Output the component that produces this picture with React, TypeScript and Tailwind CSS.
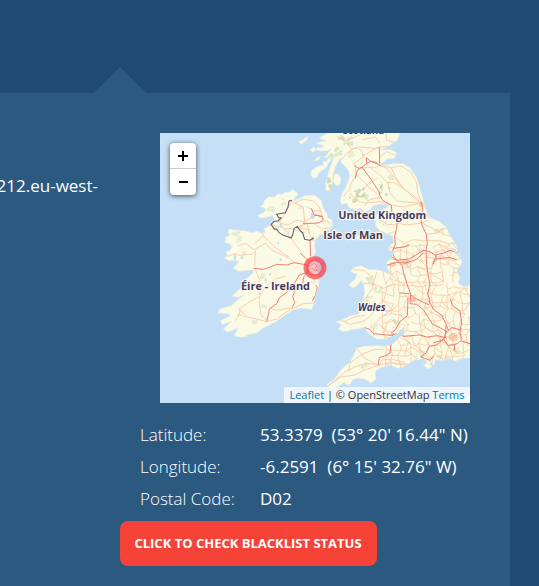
import React from "react";

// Map geometry uses three units per screen pixel.
const IRELAND =
  "M397 169 L387 179 375 177 365 185 353 183 343 193 325 191 313 203 311 213 301 221 317 227 315 237 293 247 301 255 320 253 337 247 343 259 333 271 323 281 311 287 317 297 305 301 293 295 273 299 257 293 243 293 225 291 207 289 203 299 211 305 195 313 199 321 193 327 209 333 217 341 209 353 197 357 203 367 193 375 207 383 225 381 237 385 228 397 219 405 235 415 275 410 283 416 265 432 248 445 245 462 230 476 215 490 235 493 255 485 232 502 213 518 180 528 172 540 205 542 210 550 182 562 186 575 215 565 190 588 202 598 235 585 222 608 245 614 270 604 290 600 310 585 330 575 350 565 370 550 400 530 425 525 455 530 463 505 468 480 475 462 477 441 473 411 467 381 461 366 467 356 463 341 465 321 480 306 493 301 507 291 517 277 515 259 505 256 500 241 490 226 483 201 465 188 435 187 420 197 405 201 397 203 415 183Z";

const BRITAIN =
  "M530 -10 L512 -4 500 2 488 8 478 14 490 20 500 24 482 26 467 30 484 36 492 42 472 44 466 50 482 54 502 54 514 46 502 64 492 74 508 72 500 84 488 86 492 96 478 98 466 104 454 114 452 126 460 136 472 132 476 120 486 112 498 104 506 90 518 76 526 64 518 84 510 104 504 124 498 150 496 170 506 174 515 164 519 140 524 116 530 94 540 74 546 92 556 100 566 114 570 130 562 150 557 164 546 182 540 204 546 215 560 210 566 223 585 230 602 226 612 236 628 232 640 218 665 213 685 216 682 224 662 232 646 250 648 280 662 296 680 304 698 308 702 330 688 338 684 352 705 355 695 370 680 390 682 408 698 422 668 414 650 410 628 410 602 398 580 404 573 416 592 424 584 440 565 456 578 464 590 458 604 442 612 456 614 478 608 504 606 530 594 544 568 550 545 562 528 566 546 576 534 588 552 598 572 590 592 588 612 582 628 604 650 618 680 618 710 602 734 580 732 600 712 620 700 632 680 640 642 638 610 640 590 645 582 666 570 688 545 708 522 740 500 754 510 766 532 762 552 748 568 758 578 740 596 735 615 738 632 750 648 738 645 716 665 702 690 696 714 706 736 698 765 680 792 678 802 692 822 696 825 680 850 682 870 676 884 684 910 676 940 675 L940 456 910 461 895 450 900 434 890 414 900 400 908 386 896 372 880 352 862 346 882 346 900 370 886 332 868 304 858 282 838 265 812 256 796 228 788 195 780 165 770 134 750 105 730 92 700 92 670 96 645 93 668 90 682 78 704 76 710 60 695 50 662 52 685 40 710 25 725 -10Z";

const ISLANDS =
  "M522 125 L534 122 543 138 540 154 530 158 520 146Z M415 28 L432 18 445 8 440 22 424 34Z M462 84 L472 74 482 68 476 82Z M450 50 L463 42 468 50 458 58Z M585 317 L596 305 602 309 594 322Z M789 696 L802 690 816 700 805 708Z M640 808 L650 802 668 808Z M908 812 L925 790 935 788 935 812Z";

const RED_ROADS = [
  "M280 406 L310 409 334 401 350 394 380 396 402 389 430 394 450 399",
  "M320 566 L326 540 328 528 350 512 358 494 378 480 396 464 418 426 437 420 450 406",
  "M397 524 L404 508 398 490 410 462 428 450 432 430 446 416",
  "M421 361 L436 374 448 386",
  "M452 370 L450 326 460 311",
  "M429 271 L460 271 478 269 490 260 486 250 462 246 454 226",
  "M583 98 L596 106 607 102 620 92 632 85 650 88 659 98",
  "M659 98 L658 43",
  "M620 92 L619 74 629 83 659 96",
  "M607 102 L592 112 586 135",
  "M607 103 L632 138 656 174 660 188 668 202 694 217 696 240 711 270 710 286 704 312 706 334 696 358 704 374 726 398 732 424 744 462 752 482",
  "M784 206 L788 230 783 254 784 272 799 304 802 332 798 352 800 396 804 423 810 456 803 482 810 502 808 512",
  "M698 346 L732 342 748 336",
  "M690 368 L710 382 748 378 790 352 810 356 824 366 852 360 870 352 888 358 914 356",
  "M682 396 L710 388 738 390 768 380 790 360",
  "M828 366 L828 382 818 394 824 378 870 374 890 380",
  "M718 480 L748 482 762 494 790 508 808 516",
  "M752 482 L750 512 770 514 790 530 804 552 818 574 840 584 862 598",
  "M806 502 L820 528 846 548 860 578 866 594",
  "M744 494 L742 548 720 566 706 590 694 600",
  "M614 584 L628 588 640 602 690 607 714 602 730 610 778 606 800 612 832 608 858 614",
  "M700 600 L694 624 690 660 676 668 658 674 654 698",
  "M870 496 L878 518 900 534 905 570 900 594 904 622 892 632 864 638 852 620 858 598 876 584 904 592",
  "M858 576 L856 612 832 636 808 640 798 660 782 672 810 682 820 670",
  "M884 634 L882 654 M904 624 L930 632 M852 620 L820 630",
  "M465 245 L488 252 M467 456 L472 464 466 488 457 504",
];

const MINOR_ROADS = [
  "M232 338 L258 332 282 350 318 330 330 348 384 374 M248 366 L275 364 286 354 284 400 M202 370 L226 362 248 370",
  "M334 274 L304 290 310 308 282 334 M310 308 L342 340 388 374 402 388 M334 274 L374 286 392 314 424 358",
  "M285 408 L300 442 292 454 300 486 322 456 344 438 376 430 M300 486 L297 502 302 544 320 562",
  "M298 490 L266 508 238 527 244 536 264 552 290 558 320 566 350 558 390 530",
  "M232 544 L258 552 M240 528 L238 544 225 566 M330 526 L350 532 382 526 400 526 430 512 462 510",
  "M387 204 L405 210 430 198 460 204 478 222 490 260 M394 206 L384 226 358 270 384 276 408 262 434 266 460 250",
  "M405 210 L430 224 434 266 420 286 450 290 M412 284 L442 272 448 302 461 324 M370 290 L390 286 434 300",
  "M460 270 L484 288 508 284 M482 266 L504 264 510 276 M440 222 L462 234 485 234",
  "M510 170 L520 146 520 126 528 100 552 70 574 50 596 42 646 46 662 42 690 40 706 25",
  "M558 28 L574 48 590 44 606 54 610 72 584 90 588 126 574 150 568 170 550 190 M606 70 L638 52 658 42",
  "M532 10 L554 26 590 10 610 0 M606 20 L646 12 660 30 M678 0 L680 22 704 28 M658 74 L680 56 706 66",
  "M620 92 L640 112 664 130 684 152 690 180 712 204 748 208 782 210 M658 96 L680 106 704 136 726 162 764 196 784 214",
  "M660 96 L694 104 724 98 752 118 768 144 774 180 784 206 M694 104 L706 132 730 166 764 190 784 210",
  "M606 104 L644 104 664 96 M588 126 L610 144 632 168 660 188 M568 180 L590 202 614 210 660 206 694 216",
  "M632 144 L610 170 590 180 584 210 M660 192 L630 200 612 220 M652 134 L628 154 M680 150 L700 148 730 166",
  "M694 216 L732 222 770 212 802 226 M711 270 L740 276 784 270 804 262 M704 312 L734 332 758 320 798 324",
  "M660 260 L680 274 708 276 M650 288 L680 304 704 296 M784 250 L800 240 808 256 M784 228 L770 238 774 258",
  "M785 270 L818 286 850 304 880 312 M798 304 L830 300 860 284 M800 322 L840 324 872 334",
  "M545 562 L570 574 612 564 634 546 650 520 672 500 682 460 M554 564 L590 550 614 548",
  "M582 410 L612 412 640 438 636 470 612 500 614 530 M650 418 L640 452 670 466 704 452 M604 450 L640 454",
  "M506 758 L530 738 556 716 580 704 620 690 654 696 690 690 740 694 M506 758 L542 732 584 726 612 712 652 698",
  "M566 716 L570 690 606 664 640 650 674 648 M590 646 L612 674 648 694 M654 698 L668 680 700 680 734 688",
  "M620 506 L660 532 690 534 712 518 M640 610 L642 574 664 552 690 534 M670 606 L680 572 704 560",
];

// Small repeatable generator for the lattice of local roads.
const noise = (a: number, b: number) => {
  const v = Math.sin(a * 127.1 + b * 311.7) * 43758.5453;
  return v - Math.floor(v);
};

const buildLocalRoads = () => {
  const step = 21;
  const point = (i: number, j: number) => [
    675 + i * step + (noise(i, j) - 0.5) * 20,
    335 + j * step + (noise(i + 40, j) - 0.5) * 20,
  ];
  let d = "";
  for (let i = 0; i < 13; i++) {
    for (let j = 0; j < 18; j++) {
      const [x, y] = point(i, j);
      const [rx, ry] = point(i + 1, j);
      const [bx, by] = point(i, j + 1);
      if (noise(i, j + 90) > 0.22) d += `M${x} ${y}Q${(x + rx) / 2} ${(y + ry) / 2 + 5} ${rx} ${ry}`;
      if (noise(i + 7, j + 30) > 0.22) d += `M${x} ${y}Q${(x + bx) / 2 - 4} ${(y + by) / 2} ${bx} ${by}`;
      if (noise(i + 3, j + 60) > 0.8) {
        const [cx, cy] = point(i + 1, j + 1);
        d += `M${x} ${y}L${cx} ${cy}`;
      }
    }
  }
  return d;
};

// x, y, rx, ry, opacity
const WOODS: number[][] = [
  [675, 168, 17, 22, 0.8], [598, 176, 20, 14, 0.7], [582, 196, 16, 12, 0.65], [612, 192, 12, 10, 0.6],
  [508, 148, 5, 16, 0.8], [530, 142, 5, 9, 0.4], [562, 28, 12, 16, 0.5], [535, 56, 9, 12, 0.5],
  [512, 72, 7, 10, 0.5], [690, 134, 10, 6, 0.4], [576, 64, 11, 8, 0.35], [542, 14, 8, 6, 0.5],
  [680, 262, 15, 18, 0.4], [836, 292, 14, 8, 0.4], [632, 440, 10, 16, 0.45], [656, 470, 12, 10, 0.4],
  [626, 500, 10, 9, 0.4], [650, 578, 18, 9, 0.4], [706, 574, 8, 12, 0.5], [614, 698, 12, 7, 0.4],
  [780, 662, 13, 8, 0.4], [850, 668, 20, 5, 0.4], [898, 652, 14, 6, 0.35], [742, 402, 8, 10, 0.35],
  [332, 228, 8, 7, 0.35], [370, 206, 6, 9, 0.3], [228, 302, 10, 6, 0.35], [238, 318, 7, 6, 0.3],
  [252, 360, 7, 6, 0.3], [308, 428, 8, 6, 0.35], [362, 462, 6, 5, 0.4], [282, 568, 7, 4, 0.35],
  [312, 520, 8, 4, 0.35], [458, 440, 6, 10, 0.35], [422, 222, 7, 5, 0.3], [348, 286, 6, 4, 0.3],
];

const LAKES: number[][] = [
  [458, 248, 6, 10], [225, 373, 4, 9], [246, 374, 4, 5], [348, 264, 5, 3], [363, 277, 4, 6],
  [317, 442, 3, 8], [330, 424, 3, 5], [362, 380, 3, 4], [355, 330, 3, 3], [668, 232, 3, 4],
  [386, 298, 3, 3], [576, 32, 3, 7],
];

const LOCAL_ROADS = buildLocalRoads();

function MapArtwork() {
  return (
    <svg viewBox="0 0 930 810" className="block h-full w-full" aria-hidden="true">
      <defs>
        <filter id="coast" x="-5%" y="-5%" width="110%" height="110%">
          <feTurbulence type="fractalNoise" baseFrequency="0.16" numOctaves="2" seed="8" result="n" />
          <feDisplacementMap in="SourceGraphic" in2="n" scale="5" />
        </filter>
        <clipPath id="land">
          <path d={IRELAND} />
          <path d={BRITAIN} />
        </clipPath>
      </defs>
      <rect width="930" height="810" fill="#c5dff6" />
      <g filter="url(#coast)">
        <g fill="#fbfae5" stroke="#e3eee7" strokeWidth="2">
          <path d={IRELAND} />
          <path d={BRITAIN} />
          <path d={ISLANDS} />
        </g>
        <g clipPath="url(#land)">
          {WOODS.map(([x, y, rx, ry, o], n) => (
            <g key={n} fill="#bcd5a2" opacity={o}>
              {Array.from({ length: 12 }, (_, k) => (
                <circle
                  key={k}
                  cx={x + (noise(n, k) - 0.5) * 2 * rx}
                  cy={y + (noise(n + 50, k) - 0.5) * 2 * ry}
                  r={1.5 + noise(k, n) * 3.5}
                />
              ))}
            </g>
          ))}
          {LAKES.map(([x, y, rx, ry], n) => (
            <ellipse key={n} cx={x} cy={y} rx={rx} ry={ry} fill="#c5dff6" />
          ))}
        </g>
      </g>
      <g clipPath="url(#land)" fill="none" strokeLinejoin="round">
        <path d={LOCAL_ROADS} stroke="#f5c7a2" strokeWidth="2.2" />
        <g stroke="#f5c7a6" strokeWidth="2.5">
          {MINOR_ROADS.map((d) => (
            <path key={d} d={d} />
          ))}
        </g>
        <g fill="#f4a684" opacity="0.5">
          <ellipse cx="880" cy="612" rx="15" ry="13" />
          <ellipse cx="758" cy="500" rx="10" ry="9" />
          <ellipse cx="738" cy="386" rx="12" ry="8" />
          <ellipse cx="698" cy="394" rx="11" ry="7" />
          <ellipse cx="788" cy="354" rx="6" ry="5" />
          <ellipse cx="785" cy="214" rx="6" ry="8" />
        </g>
        <g stroke="#ee7d75" strokeWidth="3">
          {RED_ROADS.map((d) => (
            <path key={d} d={d} />
          ))}
        </g>
        <path
          d="M396 202 L387 204 384 222 376 239 350 244 356 254 364 254 354 264 342 265 333 274 344 289 350 288 356 298 370 307 384 311 393 315 398 306 402 287 412 280 420 292 428 300 434 319 448 322 462 316"
          stroke="#68586e"
          strokeWidth="3.2"
        />
      </g>
      <circle cx="465" cy="404" r="27" fill="#ff6680" fillOpacity="0.38" stroke="#fa3540" strokeOpacity="0.68" strokeWidth="15" />
      <path d="M453 397 l9 -6 9 7 -5 8 10 9 M454 405 l12 8 7 -2" fill="none" stroke="#ee6870" strokeWidth="2" />
      <g
        className="font-['Open_Sans',sans-serif] font-bold"
        fill="#493960"
        stroke="#faf9f1"
        strokeWidth="7"
        strokeLinejoin="round"
        paintOrder="stroke"
      >
        <text x="548" y="3" fontSize="30" textLength="124" lengthAdjust="spacingAndGlyphs">Scotland</text>
        <text x="535" y="258" fontSize="34" textLength="264" lengthAdjust="spacingAndGlyphs">United Kingdom</text>
        <text x="490" y="317" fontSize="34" textLength="179" lengthAdjust="spacingAndGlyphs">Isle of Man</text>
        <text x="243" y="472" fontSize="34" textLength="207" lengthAdjust="spacingAndGlyphs">Éire - Ireland</text>
        <text x="594" y="533" fontSize="30" fontStyle="italic" textLength="83" lengthAdjust="spacingAndGlyphs">Wales</text>
      </g>
    </svg>
  );
}

function LocationMap() {
  return (
    <div className="relative h-[270px] w-[310px] overflow-hidden">
      <MapArtwork />
      <div className="absolute left-[10px] top-[10px] flex w-[26px] flex-col rounded bg-white text-black shadow-[0_1px_5px_rgba(0,0,0,0.65)]">
        <button aria-label="Zoom in" className="flex h-[26px] items-center justify-center border-b border-[#ccc]">
          <svg width="10" height="10" viewBox="0 0 10 10" aria-hidden="true">
            <path d="M5 0v10M0 5h10" stroke="currentColor" strokeWidth="2" />
          </svg>
        </button>
        <button aria-label="Zoom out" className="flex h-[26px] items-center justify-center">
          <svg width="9" height="2" viewBox="0 0 9 2" aria-hidden="true">
            <path d="M0 1h9" stroke="currentColor" strokeWidth="2" />
          </svg>
        </button>
      </div>
      <div className="absolute bottom-0 right-0 flex h-4 w-[186px] items-center justify-center whitespace-pre bg-white/70 text-[11px] leading-4 text-[#333]">
        <span className="text-[#0078a8]">Leaflet</span> | © OpenStreetMap <span className="text-[#0078a8]">Terms</span>
      </div>
    </div>
  );
}

const DETAILS = [
  ["Latitude:", "53.3379  (53° 20' 16.44\" N)"],
  ["Longitude:", "-6.2591  (6° 15' 32.76\" W)"],
  ["Postal Code:", "D02"],
];

export default function App() {
  return (
    <div className="h-[586px] w-[539px] overflow-hidden bg-[#1f4a73] pt-[67px] font-['Open_Sans',sans-serif] text-white">
      <div className="ml-[94px] h-[26px] w-[52px] bg-[#2c597f] [clip-path:polygon(50%_0,100%_100%,0_100%)]" />
      <main className="flex h-[493px] w-[510px] bg-[#2c597f] pt-10">
        <div className="flex w-[120px] shrink-0 justify-end pr-[22px] pt-10 text-[17px] leading-[26px]">
          <span className="whitespace-nowrap">212.eu-west-</span>
        </div>
        <section className="flex flex-col">
          <div className="ml-10">
            <LocationMap />
          </div>
          <dl className="ml-5 mt-4 text-[17px] leading-8">
            {DETAILS.map(([label, value]) => (
              <div key={label} className="flex h-8">
                <dt className="w-[120px] font-light">{label}</dt>
                <dd className="whitespace-pre">{value}</dd>
              </div>
            ))}
          </dl>
          <button className="mt-[6px] h-[45px] w-[257px] whitespace-nowrap rounded-lg bg-[#f64337] pr-px text-[13px] font-bold">
            CLICK TO CHECK BLACKLIST STATUS
          </button>
        </section>
      </main>
    </div>
  );
}
